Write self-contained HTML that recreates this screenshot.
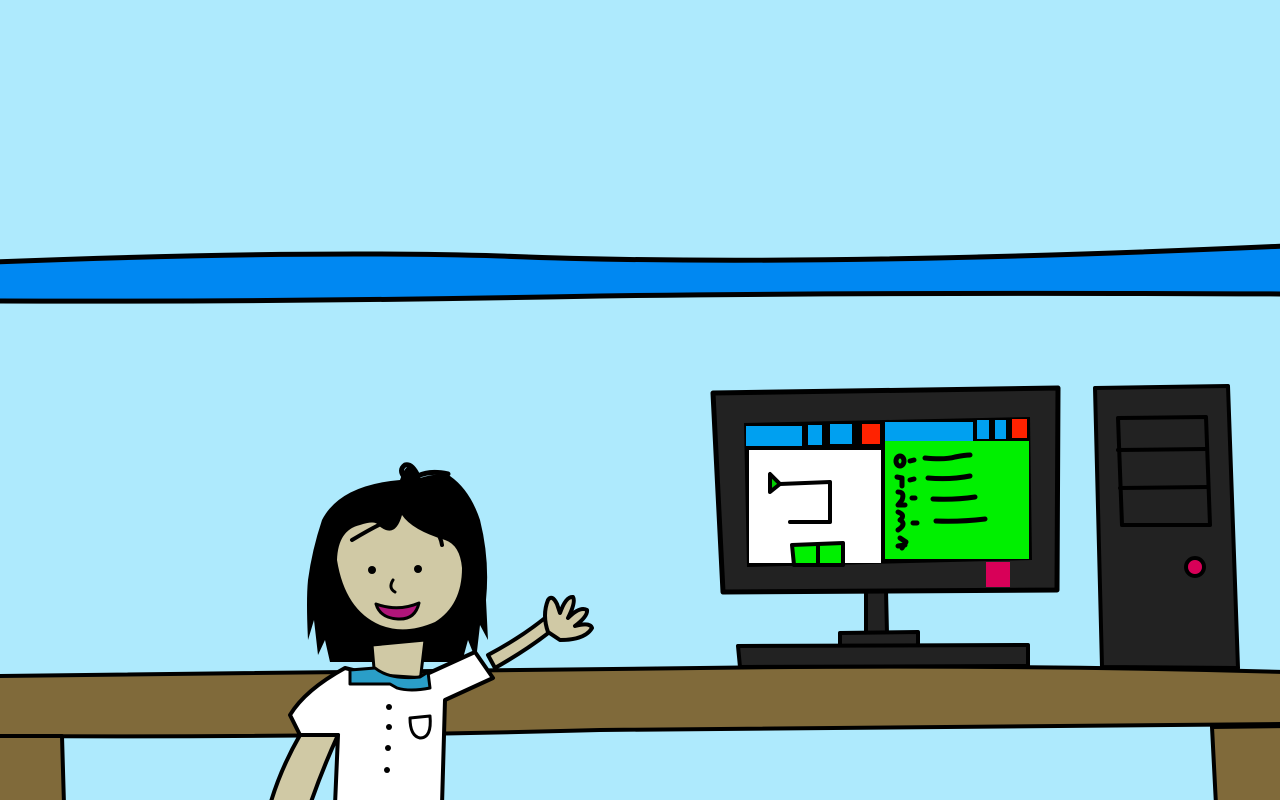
<!DOCTYPE html>
<html><head><meta charset="utf-8"><style>html,body{margin:0;padding:0;background:#aeeafd}svg{display:block}</style></head><body>
<svg width="1280" height="800" viewBox="0 0 1280 800" xmlns="http://www.w3.org/2000/svg" stroke-linejoin="round" stroke-linecap="round">
<rect width="1280" height="800" fill="#aeeafd"/>
<path d="M-5 262 Q300 250 500 256 Q800 268 1285 246 L1285 294 Q900 292 600 296 Q300 302 -5 301 Z" fill="#0088f2" stroke="#000" stroke-width="5"/>
<path d="M-5 676 Q400 670 700 668 Q1000 664 1285 672 L1285 724 Q900 728 600 730 Q300 738 -5 736 Z" fill="#806a3a" stroke="#000" stroke-width="4"/>
<path d="M-5 736 L62 736 L64 805 L-5 805 Z" fill="#806a3a" stroke="#000" stroke-width="4"/>
<path d="M1212 727 L1285 726 L1285 805 L1216 805 Z" fill="#806a3a" stroke="#000" stroke-width="4"/>
<path d="M1095 388 L1228 386 L1238 668 L1102 667 Z" fill="#222" stroke="#000" stroke-width="4"/>
<path d="M1118 418 L1206 417 L1210 525 L1122 525 Z" fill="#222" stroke="#000" stroke-width="4"/>
<path d="M1118 450 L1206 449 M1120 488 L1208 487" stroke="#000" stroke-width="4"/>
<circle cx="1195" cy="567" r="9" fill="#d80058" stroke="#000" stroke-width="4"/>
<path d="M866 590 L886 590 L887 634 L866 634 Z" fill="#222" stroke="#000" stroke-width="4"/>
<path d="M840 633 L918 632 L918 646 L840 646 Z" fill="#222" stroke="#000" stroke-width="4"/>
<path d="M738 646 L1028 645 L1028 666 L740 667 Z" fill="#222" stroke="#000" stroke-width="4"/>
<path d="M713 393 L1058 388 L1057 590 L723 592 Z" fill="#222" stroke="#000" stroke-width="5"/>
<path d="M744 423 L1030 417 L1032 560 L747 567 Z" fill="#000"/>
<rect x="746" y="426" width="56" height="20" fill="#00a0f0"/>
<rect x="808" y="425" width="14" height="20" fill="#00a0f0"/>
<rect x="830" y="424" width="22" height="20" fill="#00a0f0"/>
<rect x="862" y="424" width="18" height="20" fill="#ff2200"/>
<rect x="885" y="422" width="88" height="19" fill="#00a0f0"/>
<rect x="977" y="420" width="12" height="19" fill="#00a0f0"/>
<rect x="995" y="420" width="11" height="19" fill="#00a0f0"/>
<rect x="1012" y="419" width="15" height="19" fill="#ff2200"/>
<rect x="749" y="450" width="132" height="113" fill="#fff"/>
<rect x="885" y="441" width="144" height="118" fill="#00f000"/>
<path d="M770 474 L770 492 L780 484 Z" fill="#00d000" stroke="#000" stroke-width="4"/>
<path d="M780 484 L830 482 L830 522 L790 522" fill="none" stroke="#000" stroke-width="4"/>
<path d="M792 545 L843 543 L843 565 L794 565 Z" fill="#00f000" stroke="#000" stroke-width="4"/>
<path d="M818 545 L818 565" stroke="#000" stroke-width="4"/>
<rect x="986" y="562" width="24" height="25" fill="#d80058"/>
<g stroke="#000" stroke-width="5" fill="none">
<ellipse cx="900" cy="461" rx="4" ry="5"/>
<path d="M910 461 L914 460 M925 458 Q945 460 955 457 Q965 455 970 455"/>
<path d="M897 477 L902 478 L902 486 M910 480 L914 479 M928 478 Q950 480 970 476"/>
<path d="M898 492 Q905 492 902 500 L898 505 L905 505 M912 498 L915 498 M933 499 Q955 500 975 497"/>
<path d="M898 512 Q906 515 900 520 Q907 524 898 530 M913 523 L917 523 M936 521 Q960 522 985 519"/>
<path d="M898 546 L905 545 M900 538 L906 542 L902 548"/>
</g>
<!-- girl -->
<path d="M495 668 Q530 648 552 630 L545 618 Q520 638 488 655 Z" fill="#d0c9a5" stroke="#000" stroke-width="4"/>
<path d="M548 632 Q542 615 548 600 Q552 594 557 604 L560 613 Q566 596 573 597 Q576 602 568 618 Q580 606 587 610 Q588 616 575 626 Q590 622 592 628 Q585 640 560 640 Z" fill="#d0c9a5" stroke="#000" stroke-width="4"/>
<path d="M322 520 Q340 485 400 480 Q405 465 412 465 Q418 470 420 478 Q440 472 450 476 Q470 490 480 520 Q490 560 486 600 L488 640 L480 625 L476 660 L468 640 L462 662 L330 662 L325 640 L318 655 L314 620 L308 640 Q306 600 308 580 Q312 550 322 520 Z" fill="#000"/>
<path d="M405 478 Q398 470 405 465 Q412 463 418 476 Q430 470 448 474" fill="none" stroke="#000" stroke-width="5"/>
<path d="M372 645 L375 680 L420 682 L425 640 Z" fill="#d0c9a5" stroke="#000" stroke-width="3"/>
<path d="M337 560 Q338 530 360 525 Q375 520 378 525 Q395 540 402 515 Q412 530 445 540 Q460 545 462 568 Q462 605 435 622 Q405 635 380 625 Q345 610 337 560 Z" fill="#d0c9a5"/>
<path d="M352 540 Q372 528 385 522 M420 515 Q440 530 442 545" stroke="#000" stroke-width="4" fill="none"/>
<circle cx="372" cy="570" r="4" fill="#000"/>
<circle cx="418" cy="569" r="4" fill="#000"/>
<path d="M393 580 Q388 588 395 592" stroke="#000" stroke-width="3" fill="none"/>
<path d="M376 604 Q398 612 419 603 Q415 620 398 619 Q380 618 376 604 Z" fill="#b0157a" stroke="#000" stroke-width="3"/>
<path d="M290 715 Q305 690 345 668 L373 675 L418 678 L475 652 L493 678 L445 700 L442 805 L335 805 L338 735 L300 735 Z" fill="#fff" stroke="#000" stroke-width="4"/>
<path d="M300 735 Q280 770 270 805 L310 805 Q322 770 338 735 Z" fill="#d0c9a5" stroke="#000" stroke-width="4"/>
<path d="M350 670 L375 668 Q390 680 420 677 L428 672 L430 688 Q410 692 397 688 L390 684 L350 684 Z" fill="#2a9ec8" stroke="#000" stroke-width="3"/>
<g fill="#000"><circle cx="389" cy="707" r="3"/><circle cx="389" cy="727" r="3"/><circle cx="388" cy="748" r="3"/><circle cx="387" cy="770" r="3"/></g>
<path d="M410 718 L430 716 Q432 738 420 738 Q410 736 410 718 Z" fill="#fff" stroke="#000" stroke-width="3"/>
</svg>
</body></html>
